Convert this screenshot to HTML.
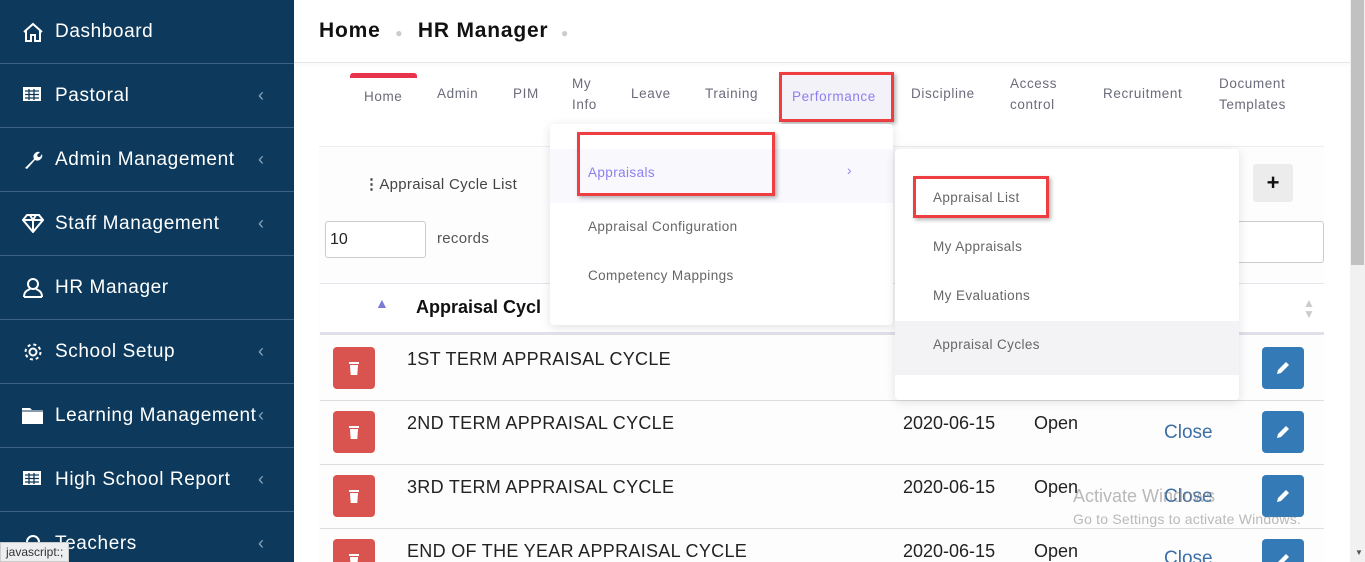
<!DOCTYPE html>
<html style="width:1365px;height:562px;overflow:hidden"><head><meta charset="utf-8"><style>
*{box-sizing:border-box;margin:0;padding:0}
body{width:1365px;height:562px;overflow:hidden;background:#fff;font-family:"Liberation Sans",sans-serif;position:relative}
.a{position:absolute}
#sb{left:0;top:0;width:294px;height:562px;background:#0d3a5c}
.it{position:absolute;left:0;width:294px;height:64px;border-bottom:1px solid #3e6283;color:#fff;font-size:19px;letter-spacing:.6px}
.it span.t{position:absolute;left:55px;top:21px}
.it .ch{position:absolute;left:258px;top:21px;color:#8ea3b6;font-size:18px}
.it svg{position:absolute;left:22px;top:21px}
.tab{position:absolute;font-size:13.5px;color:#6b6b7b;line-height:21px;letter-spacing:.6px}
.dd{position:absolute;background:#fff;box-shadow:0 2px 10px rgba(0,0,0,.12);border-radius:4px}
.di{position:absolute;font-size:13.5px;color:#666;letter-spacing:.4px}
.rb{position:absolute;border:3px solid #ef3e42;box-shadow:2px 2px 4px rgba(0,0,0,.3)}
.row{position:absolute;left:320px;width:1004px;border-bottom:1px solid #ddd;overflow:visible}
.del{position:absolute;left:13px;width:42px;height:42px;background:#d9534f;border-radius:4px}
.ed{position:absolute;left:942px;width:42px;height:42px;background:#337ab7;border-radius:4px}
.del svg,.ed svg{position:absolute;left:13px;top:13px}
.nm{position:absolute;left:87px;font-size:18px;color:#222;letter-spacing:.3px}
.dt{position:absolute;left:583px;font-size:18px;color:#222}
.st{position:absolute;left:714px;font-size:18px;color:#222}
.cl{position:absolute;left:844px;font-size:19px;color:#3d6ea5}
</style></head><body>
<div id="sb" class="a">
 <div class="it" style="top:0"><svg width="22" height="22" viewBox="0 0 22 22" fill="none" stroke="#fff" stroke-width="2"><path d="M2 11 L11 3 L20 11 M4 9 V20 H9 V14 H13 V20 H18 V9"/></svg><span class="t">Dashboard</span></div>
 <div class="it" style="top:64px"><svg width="20" height="18" viewBox="0 0 20 18"><rect x="1" y="2" width="18" height="14" fill="#fff"/><path d="M3 6H17M3 9.5H17M3 13H17M7 4V15M12 4V15" stroke="#0d3a5c" stroke-width="1.3"/></svg><span class="t">Pastoral</span><span class="ch">&#8249;</span></div>
 <div class="it" style="top:128px"><svg width="22" height="22" viewBox="0 0 22 22"><path d="M3 19 L12 10 A5 5 0 0 1 18 3 L15 6 L16 8 L18 8 L20 5 A5 5 0 0 1 13 11 L5 20 Z" fill="#fff"/></svg><span class="t">Admin Management</span><span class="ch">&#8249;</span></div>
 <div class="it" style="top:192px"><svg width="22" height="20" viewBox="0 0 22 20" fill="none" stroke="#fff" stroke-width="2"><path d="M5 2H17L21 7L11 19L1 7Z M1 7H21 M8 2L11 7L14 2 M11 7V19"/></svg><span class="t">Staff Management</span><span class="ch">&#8249;</span></div>
 <div class="it" style="top:256px"><svg width="22" height="22" viewBox="0 0 22 22" fill="none" stroke="#fff" stroke-width="2"><circle cx="11" cy="7" r="5"/><path d="M2 20 C2 14 6 13 8 12 M20 20 C20 14 16 13 14 12 M2 20H20"/></svg><span class="t">HR Manager</span></div>
 <div class="it" style="top:320px"><svg width="22" height="22" viewBox="0 0 22 22" fill="none" stroke="#fff" stroke-width="2"><circle cx="11" cy="11" r="3.5"/><circle cx="11" cy="11" r="7.5" stroke-dasharray="3 2.9"/></svg><span class="t">School Setup</span><span class="ch">&#8249;</span></div>
 <div class="it" style="top:384px"><svg width="22" height="20" viewBox="0 0 22 20"><path d="M0 3H8L10 5H21V19H0Z" fill="#fff"/><path d="M0 6H21" stroke="#0d3a5c" stroke-width="1"/></svg><span class="t">Learning Management</span><span class="ch">&#8249;</span></div>
 <div class="it" style="top:448px"><svg width="20" height="18" viewBox="0 0 20 18"><rect x="1" y="2" width="18" height="14" fill="#fff"/><path d="M3 6H17M3 9.5H17M3 13H17M7 4V15M12 4V15" stroke="#0d3a5c" stroke-width="1.3"/></svg><span class="t">High School Report</span><span class="ch">&#8249;</span></div>
 <div class="it" style="top:512px;border:none"><svg width="22" height="22" viewBox="0 0 22 22" fill="none" stroke="#fff" stroke-width="2"><circle cx="11" cy="9" r="6"/></svg><span class="t">Teachers</span><span class="ch">&#8249;</span></div>
</div>
<div class="a" style="left:0;top:542px;height:20px;padding:2px 5px;background:#eceef0;border:1px solid #ccc;font-size:12px;color:#333">javascript:;</div>

<div class="a" style="left:294px;top:0;width:1056px;height:63px;border-bottom:1px solid #e6e6e6;box-shadow:0 2px 4px rgba(0,0,0,.03)"></div>
<div class="a" style="left:319px;top:19px;font-size:21px;font-weight:bold;color:#111;letter-spacing:.8px">Home <span style="color:#ccc;font-size:12px;margin:0 8px">●</span> HR Manager <span style="color:#ccc;font-size:12px;margin-left:6px">●</span></div>

<div class="a" style="left:350px;top:73px;width:67px;height:5px;background:#e8334d;border-radius:3px 3px 0 0"></div>
<div class="tab" style="left:364px;top:86px">Home</div>
<div class="tab" style="left:437px;top:83px">Admin</div>
<div class="tab" style="left:513px;top:83px">PIM</div>
<div class="tab" style="left:572px;top:73px">My<br>Info</div>
<div class="tab" style="left:631px;top:83px">Leave</div>
<div class="tab" style="left:705px;top:83px">Training</div>
<div class="a" style="left:780px;top:73px;width:113px;height:47px;background:#f2f2f8"></div>
<div class="tab" style="left:792px;top:86px;color:#8d7ff0">Performance</div>
<div class="rb" style="left:779px;top:72px;width:115px;height:50px"></div>
<div class="tab" style="left:911px;top:83px">Discipline</div>
<div class="tab" style="left:1010px;top:73px">Access<br>control</div>
<div class="tab" style="left:1103px;top:83px">Recruitment</div>
<div class="tab" style="left:1219px;top:73px">Document<br>Templates</div>

<div class="a" style="left:319px;top:146px;width:1005px;height:416px;background:#fdfdfe;border-top:1px solid #eee"></div>
<div class="a" style="left:364px;top:175px;font-size:15px;color:#444;letter-spacing:.3px"><b style="font-size:15px">&#8942;</b>Appraisal Cycle List</div>
<div class="a" style="left:325px;top:221px;width:101px;height:37px;border:1px solid #ccc;border-radius:3px;background:#fff;font-size:16px;padding:9px 4px;color:#222">10</div>
<div class="a" style="left:437px;top:230px;font-size:15px;color:#555;letter-spacing:.3px">records</div>
<div class="a" style="left:1253px;top:164px;width:40px;height:38px;background:#ececec;border-radius:3px;font-size:22px;font-weight:bold;text-align:center;line-height:37px;color:#111">+</div>
<div class="a" style="left:1200px;top:221px;width:124px;height:42px;border:1px solid #ccc;border-radius:3px;background:#fff"></div>
<div class="a" style="left:320px;top:283px;width:1004px;height:52px;border-top:1px solid #e5e5ee;border-bottom:3px solid #e0e0ea;background:#fff"></div>
<div class="a" style="left:375px;top:295px;font-size:14px;color:#7b7bd8">▲</div>
<div class="a" style="left:416px;top:297px;font-size:18px;font-weight:bold;color:#111">Appraisal Cycl</div>
<div class="a" style="left:1303px;top:298px;font-size:12px;line-height:11px;color:#ccc">▲<br>▼</div>

<div class="row" style="top:336px;height:65px"><div class="del" style="top:11px"><svg width="16" height="16" viewBox="0 0 16 16" fill="#fff"><rect x="3" y="2" width="10" height="2"/><path d="M4 5H12L11.3 15H4.7Z"/></svg></div><div class="nm" style="top:13px">1ST TERM APPRAISAL CYCLE</div><div class="ed" style="top:11px"><svg width="16" height="16" viewBox="0 0 16 16" fill="#fff"><path d="M2 14L3 10L11 2L14 5L6 13Z"/></svg></div></div>
<div class="row" style="top:401px;height:64px"><div class="del" style="top:10px"><svg width="16" height="16" viewBox="0 0 16 16" fill="#fff"><rect x="3" y="2" width="10" height="2"/><path d="M4 5H12L11.3 15H4.7Z"/></svg></div><div class="nm" style="top:12px">2ND TERM APPRAISAL CYCLE</div><div class="dt" style="top:12px">2020-06-15</div><div class="st" style="top:12px">Open</div><div class="cl" style="top:21px">Close</div><div class="ed" style="top:10px"><svg width="16" height="16" viewBox="0 0 16 16" fill="#fff"><path d="M2 14L3 10L11 2L14 5L6 13Z"/></svg></div></div>
<div class="row" style="top:465px;height:64px"><div class="del" style="top:10px"><svg width="16" height="16" viewBox="0 0 16 16" fill="#fff"><rect x="3" y="2" width="10" height="2"/><path d="M4 5H12L11.3 15H4.7Z"/></svg></div><div class="nm" style="top:12px">3RD TERM APPRAISAL CYCLE</div><div class="dt" style="top:12px">2020-06-15</div><div class="st" style="top:12px">Open</div><div class="cl" style="top:21px">Close</div><div class="ed" style="top:10px"><svg width="16" height="16" viewBox="0 0 16 16" fill="#fff"><path d="M2 14L3 10L11 2L14 5L6 13Z"/></svg></div></div>
<div class="row" style="top:529px;height:33px;border:none"><div class="del" style="top:10px"><svg width="16" height="16" viewBox="0 0 16 16" fill="#fff"><rect x="3" y="2" width="10" height="2"/><path d="M4 5H12L11.3 15H4.7Z"/></svg></div><div class="nm" style="top:12px">END OF THE YEAR APPRAISAL CYCLE</div><div class="dt" style="top:12px">2020-06-15</div><div class="st" style="top:12px">Open</div><div class="cl" style="top:19px">Close</div><div class="ed" style="top:10px"><svg width="16" height="16" viewBox="0 0 16 16" fill="#fff"><path d="M2 14L3 10L11 2L14 5L6 13Z"/></svg></div></div>

<div class="a" style="left:1073px;top:486px;font-size:18px;color:rgba(130,130,130,.55)">Activate Windows</div>
<div class="a" style="left:1073px;top:511px;font-size:14px;color:rgba(130,130,130,.55);letter-spacing:.2px">Go to Settings to activate Windows.</div>

<div class="dd" style="left:550px;top:124px;width:343px;height:201px"></div>
<div class="a" style="left:550px;top:149px;width:343px;height:54px;background:#f8f8fd"></div>
<div class="di" style="left:588px;top:165px;color:#8d7ff0">Appraisals</div>
<div class="di" style="left:847px;top:163px;color:#8d7ff0">›</div>
<div class="rb" style="left:577px;top:132px;width:198px;height:64px"></div>
<div class="di" style="left:588px;top:219px">Appraisal Configuration</div>
<div class="di" style="left:588px;top:268px">Competency Mappings</div>

<div class="dd" style="left:895px;top:149px;width:344px;height:251px"></div>
<div class="a" style="left:895px;top:321px;width:344px;height:54px;background:#f3f3f6"></div>
<div class="di" style="left:933px;top:190px">Appraisal List</div>
<div class="rb" style="left:913px;top:176px;width:136px;height:42px"></div>
<div class="di" style="left:933px;top:239px">My Appraisals</div>
<div class="di" style="left:933px;top:288px">My Evaluations</div>
<div class="di" style="left:933px;top:337px">Appraisal Cycles</div>

<div class="a" style="left:1350px;top:0;width:15px;height:562px;background:#f1f1f1"></div>
<div class="a" style="left:1351px;top:0;width:13px;height:265px;background:#c1c1c1"></div>
<div class="a" style="left:1355px;top:548px;font-size:8px;color:#555">▼</div>
</body></html>
